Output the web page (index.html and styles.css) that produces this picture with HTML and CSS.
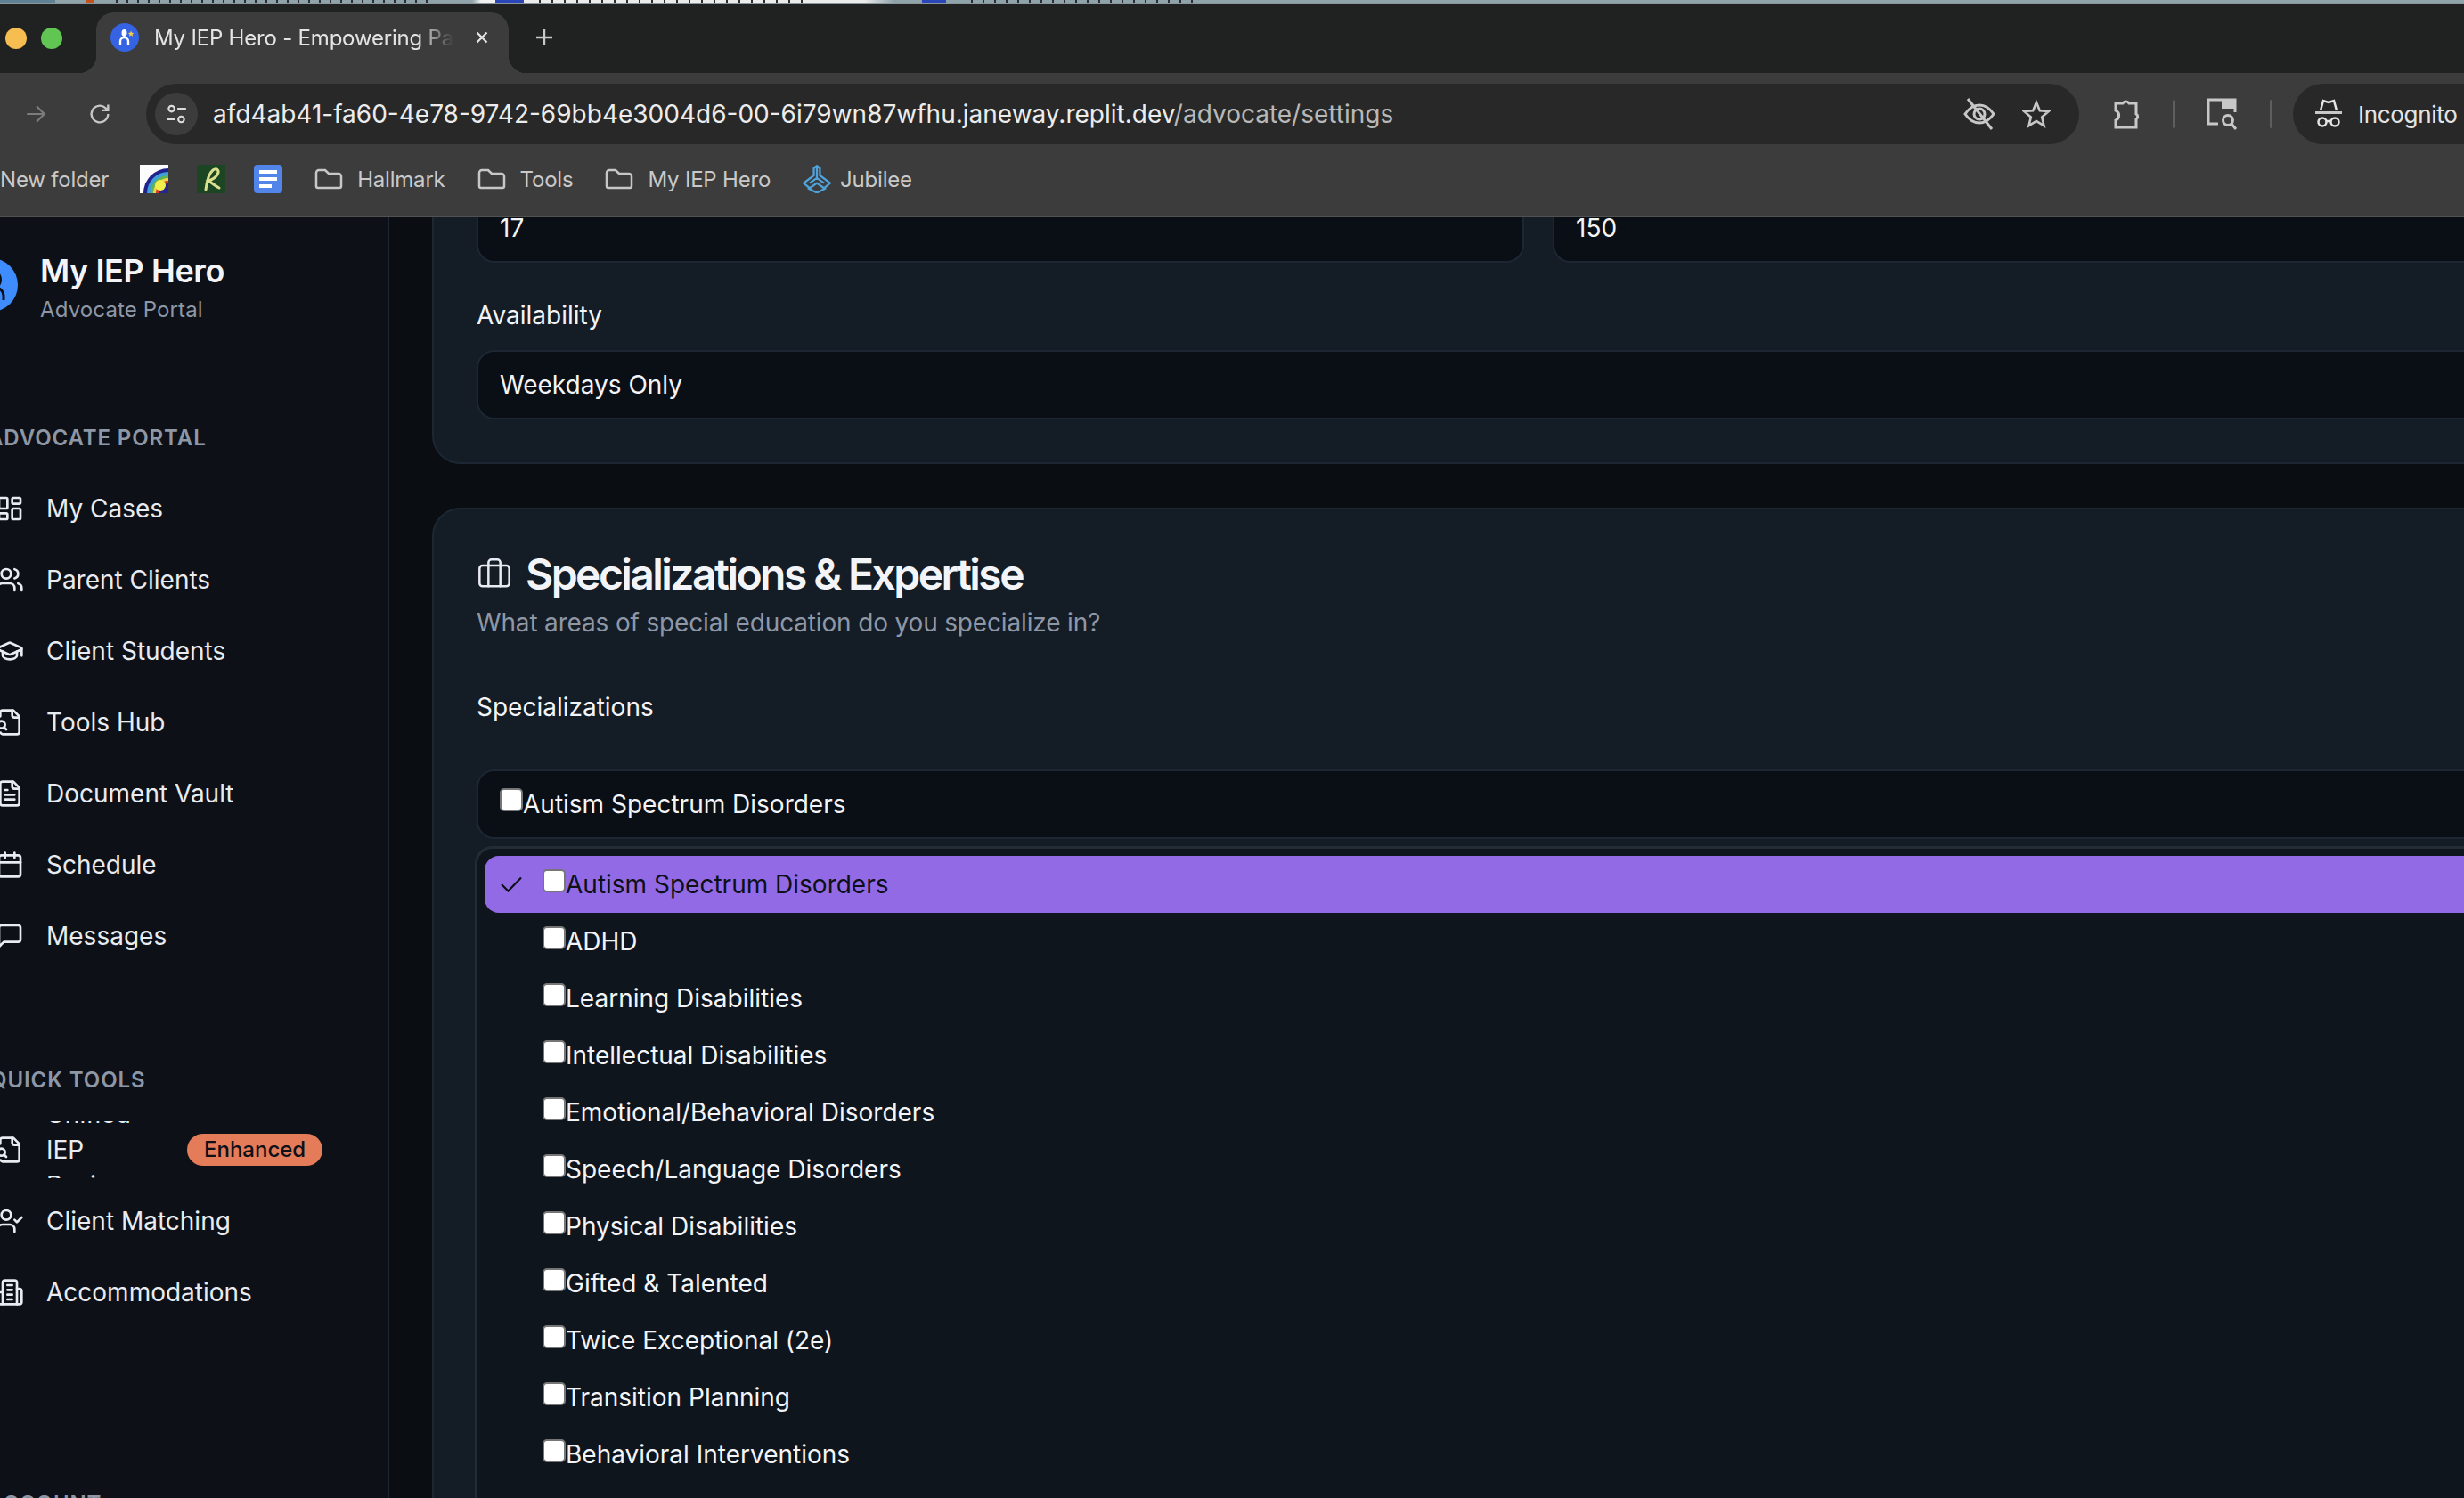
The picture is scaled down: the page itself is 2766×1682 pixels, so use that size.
FILE: index.html
```html
<!DOCTYPE html>
<html lang="en">
  <head>
    <meta charset="UTF-8" />
    <meta name="viewport" content="width=device-width, initial-scale=1.0" />
    <title>My IEP Hero - Advocate Settings</title>
    <link rel="stylesheet" href="styles.css">
  </head>
  <body>
    <div class="top-strip"></div>

    <header class="browser">
      <div class="tabstrip">
        <span class="light light-yellow"></span>
        <span class="light light-green"></span>
        <div class="tab">
          <svg class="favicon" viewBox="0 0 32 32">
            <circle cx="16" cy="16" r="16" fill="#3563e3" />
            <ellipse cx="15.5" cy="11" rx="3" ry="4" fill="#fff" />
            <path d="M11 24v-3.5a4.5 4.5 0 0 1 9 0V24" fill="none" stroke="#fff" stroke-width="2.4" />
            <path d="M23 8.5l1 2.2 2.3.2-1.8 1.5.6 2.3-2.1-1.3-2 1.3.6-2.3-1.8-1.5 2.3-.2z" fill="#f6cf45" />
          </svg>
          <span class="tab-title">My IEP Hero - Empowering Parents</span>
          <svg class="tab-close" viewBox="0 0 16 16"><path d="M2.5 2.5l11 11M13.5 2.5l-11 11" /></svg>
        </div>
        <svg class="new-tab" viewBox="0 0 20 20"><path d="M10 1v18M1 10h18" /></svg>
      </div>

      <div class="toolbar">
        <svg class="tool-icon tool-forward" viewBox="0 0 24 24"><path d="M3 12h18M13 4l8 8-8 8" /></svg>
        <svg class="tool-icon tool-reload" viewBox="0 0 24 24"><path d="M20 12a8 8 0 1 1-2.6-5.9L20 8.5M20 3v5.5h-5.5" /></svg>
        <div class="omnibox">
          <span class="site-btn">
            <svg viewBox="0 0 24 24"><circle cx="7" cy="6.5" r="3" /><path d="M13 6.5h9M2 17.5h9" /><circle cx="17" cy="17.5" r="3" /></svg>
          </span>
          <span class="url">afd4ab41-fa60-4e78-9742-69bb4e3004d6-00-6i79wn87wfhu.janeway.replit.dev<span class="url-path">/advocate/settings</span></span>
          <svg class="omni-icon" viewBox="0 0 36 36"><path d="M2 18c4-6 9-10 16-10s12 4 16 10c-4 6-9 10-16 10S6 24 2 18z" /><circle cx="18" cy="18" r="6" /><path d="M5 1l27 34" /></svg>
          <svg class="omni-icon omni-star" viewBox="0 0 32 32"><path d="M16 3l3.8 9.2 9.9.8-7.5 6.5 2.3 9.7L16 24l-8.5 5.2 2.3-9.7L2.3 13l9.9-.8z" /></svg>
        </div>
        <svg class="tool-icon tool-puzzle" viewBox="0 0 32 36"><path d="M4 6h8a4 4 0 0 1 7 0h8v12a3.5 3.5 0 0 1 0 6v9H4v-8a6 6 0 0 0 0-11z" /></svg>
        <span class="tool-sep"></span>
        <svg class="tool-icon tool-media" viewBox="0 0 36 38">
          <path d="M14 30H3V3h30v14" />
          <path class="fill" d="M18 2h16v11H18z" />
          <circle cx="25" cy="26" r="5.5" /><path d="M29 30l5 6" />
        </svg>
        <span class="tool-sep"></span>
        <div class="incognito">
          <svg viewBox="0 0 30 36">
            <path class="fill" d="M0 15h30v3H0z" />
            <path d="M6 14l3-11 6 2 6-2 3 11" />
            <circle cx="8" cy="27" r="4.5" /><circle cx="22" cy="27" r="4.5" /><path d="M12 26h6" />
          </svg>
          <span>Incognito</span>
        </div>
      </div>

      <nav class="bookmarks">
        <span class="mark mark-first">New folder</span>
        <svg class="fav" viewBox="0 0 32 32">
          <rect width="32" height="32" fill="#fdfdfd" />
          <path d="M32 4A28 28 0 0 0 4 32h28z" fill="#22228c" />
          <path d="M32 8A24 24 0 0 0 8 32h24z" fill="#3f9fd8" />
          <path d="M32 12A20 20 0 0 0 12 32h20z" fill="#62b356" />
          <path d="M32 15A17 17 0 0 0 15 32h17z" fill="#e9d84b" />
          <path d="M32 18A14 14 0 0 0 18 32h14z" fill="#d73a2c" />
          <path d="M32 21A11 11 0 0 0 21 32h11z" fill="#26268c" />
          <circle cx="23" cy="23" r="6" fill="#f2ee4a" />
        </svg>
        <svg class="fav fav-r" viewBox="0 0 32 32">
          <rect width="32" height="32" fill="#1c4523" />
          <path d="M10 28c1-8 3-18 8-22 4-3 8 0 5 5-2 4-7 6-10 7 3 2 8 6 12 8" fill="none" stroke="#dbe08f" stroke-width="3" stroke-linecap="round" />
        </svg>
        <svg class="fav fav-doc" viewBox="0 0 32 32">
          <rect width="32" height="32" rx="4" fill="#5185ea" />
          <path d="M6 6h20v4H6zM6 14h20v4H6zM6 22h14v4H6z" fill="#fff" />
        </svg>
        <span class="mark"><svg class="folder" viewBox="0 0 32 24"><path d="M2 5a3 3 0 0 1 3-3h7l4 4h11a3 3 0 0 1 3 3v11a2 2 0 0 1-2 2H4a2 2 0 0 1-2-2z" /></svg>Hallmark</span>
        <span class="mark"><svg class="folder" viewBox="0 0 32 24"><path d="M2 5a3 3 0 0 1 3-3h7l4 4h11a3 3 0 0 1 3 3v11a2 2 0 0 1-2 2H4a2 2 0 0 1-2-2z" /></svg>Tools</span>
        <span class="mark"><svg class="folder" viewBox="0 0 32 24"><path d="M2 5a3 3 0 0 1 3-3h7l4 4h11a3 3 0 0 1 3 3v11a2 2 0 0 1-2 2H4a2 2 0 0 1-2-2z" /></svg>My IEP Hero</span>
        <span class="mark"><svg class="jubilee" viewBox="0 0 28 28"><path d="M14 1l-3 2.500v7L1 18l6 5 7-5 7 5 6-5-10-7.500v-7zM14 1v12M14 13l-7 5M14 13l7 5M5 23l9 4.500 9-4.500" /></svg>Jubilee</span>
      </nav>
    </header>

    <div class="app">
      <aside class="sidebar">
        <div class="brand">
          <svg class="brand-logo" viewBox="0 0 60 60">
            <circle cx="30" cy="30" r="30" fill="#3f8cff" />
            <ellipse cx="37" cy="24" rx="5" ry="8" fill="#0d1117" />
            <path d="M26 47v-5a9 9 0 0 1 18 0v5" fill="none" stroke="#0d1117" stroke-width="3" />
          </svg>
          <div class="brand-text">
            <div class="brand-name">My IEP Hero</div>
            <div class="brand-sub">Advocate Portal</div>
          </div>
        </div>

        <div class="nav-label">ADVOCATE PORTAL</div>
        <a class="nav-item"><svg viewBox="0 0 24 24"><rect x="3" y="3" width="7" height="9" rx="1" /><rect x="14" y="3" width="7" height="5" rx="1" /><rect x="14" y="12" width="7" height="9" rx="1" /><rect x="3" y="16" width="7" height="5" rx="1" /></svg><span>My Cases</span></a>
        <a class="nav-item"><svg viewBox="0 0 24 24"><path d="M16 21v-2a4 4 0 0 0-4-4H6a4 4 0 0 0-4 4v2" /><circle cx="9" cy="7" r="4" /><path d="M22 21v-2a4 4 0 0 0-3-3.87M16 3.13a4 4 0 0 1 0 7.75" /></svg><span>Parent Clients</span></a>
        <a class="nav-item"><svg viewBox="0 0 24 24"><path d="M21.4 10.900a1 1 0 0 0 0-1.800L12.800 5.200a2 2 0 0 0-1.700 0L2.600 9.100a1 1 0 0 0 0 1.800l8.500 3.900a2 2 0 0 0 1.700 0z" /><path d="M22 10v6M6 12.500V16a6 3 0 0 0 12 0v-3.500" /></svg><span>Client Students</span></a>
        <a class="nav-item"><svg viewBox="0 0 24 24"><path d="M14 2v4a2 2 0 0 0 2 2h4" /><path d="M4.3 20.700A2 2 0 0 0 6 22h12a2 2 0 0 0 2-2V7l-5-5H6a2 2 0 0 0-2 2v3" /><circle cx="5" cy="14" r="3" /><path d="M9 18l-1.900-1.900" /></svg><span>Tools Hub</span></a>
        <a class="nav-item"><svg viewBox="0 0 24 24"><path d="M15 2H6a2 2 0 0 0-2 2v16a2 2 0 0 0 2 2h12a2 2 0 0 0 2-2V7z" /><path d="M14 2v4a2 2 0 0 0 2 2h4M10 9H8M16 13H8M16 17H8" /></svg><span>Document Vault</span></a>
        <a class="nav-item"><svg viewBox="0 0 24 24"><path d="M8 2v4M16 2v4" /><rect x="3" y="4" width="18" height="18" rx="2" /><path d="M3 10h18" /></svg><span>Schedule</span></a>
        <a class="nav-item"><svg viewBox="0 0 24 24"><path d="M21 15a2 2 0 0 1-2 2H7l-4 4V5a2 2 0 0 1 2-2h14a2 2 0 0 1 2 2z" /></svg><span>Messages</span></a>

        <div class="nav-label nav-label-quick">QUICK TOOLS</div>
        <a class="nav-item nav-item-clip"><svg viewBox="0 0 24 24"><path d="M14 2v4a2 2 0 0 0 2 2h4" /><path d="M4.3 20.700A2 2 0 0 0 6 22h12a2 2 0 0 0 2-2V7l-5-5H6a2 2 0 0 0-2 2v3" /><circle cx="5" cy="14" r="3" /><path d="M9 18l-1.900-1.900" /></svg><span class="nav-wrap">Unified IEP Review</span><span class="badge">Enhanced</span></a>
        <a class="nav-item"><svg viewBox="0 0 24 24"><path d="M16 21v-2a4 4 0 0 0-4-4H6a4 4 0 0 0-4 4v2" /><circle cx="9" cy="7" r="4" /><path d="M16 11l2 2 4-4" /></svg><span>Client Matching</span></a>
        <a class="nav-item"><svg viewBox="0 0 24 24"><path d="M6 22V4a2 2 0 0 1 2-2h8a2 2 0 0 1 2 2v18z" /><path d="M6 12H4a2 2 0 0 0-2 2v6a2 2 0 0 0 2 2h2M18 9h2a2 2 0 0 1 2 2v9a2 2 0 0 1-2 2h-2M10 6h4M10 10h4M10 14h4M10 18h4" /></svg><span>Accommodations</span></a>

        <div class="nav-label nav-label-account">ACCOUNT</div>
      </aside>

      <main class="main">
        <section class="card">
          <div class="field-row">
            <div class="input">17</div>
            <div class="input">150</div>
          </div>
          <label class="field-label">Availability</label>
          <div class="input">Weekdays Only</div>
        </section>

        <section class="card">
          <h2 class="card-title">
            <svg viewBox="0 0 24 24"><path d="M16 20V4a2 2 0 0 0-2-2h-4a2 2 0 0 0-2 2v16" /><rect x="2" y="6" width="20" height="14" rx="2" /></svg>
            Specializations &amp; Expertise
          </h2>
          <p class="card-sub">What areas of special education do you specialize in?</p>
          <label class="field-label field-label-spec">Specializations</label>
          <div class="input input-check"><input type="checkbox" />Autism Spectrum Disorders</div>
          <div class="dropdown">
            <div class="option option-active">
              <svg class="option-check" viewBox="0 0 24 18"><path d="M1 9l7.5 7.500L23 1.500" /></svg>
              <input type="checkbox" />Autism Spectrum Disorders
            </div>
            <div class="option"><input type="checkbox" />ADHD</div>
            <div class="option"><input type="checkbox" />Learning Disabilities</div>
            <div class="option"><input type="checkbox" />Intellectual Disabilities</div>
            <div class="option"><input type="checkbox" />Emotional/Behavioral Disorders</div>
            <div class="option"><input type="checkbox" />Speech/Language Disorders</div>
            <div class="option"><input type="checkbox" />Physical Disabilities</div>
            <div class="option"><input type="checkbox" />Gifted &amp; Talented</div>
            <div class="option"><input type="checkbox" />Twice Exceptional (2e)</div>
            <div class="option"><input type="checkbox" />Transition Planning</div>
            <div class="option"><input type="checkbox" />Behavioral Interventions</div>
          </div>
        </section>
      </main>
    </div>
  </body>
</html>
```

FILE: styles.css
```css
html,
body {
  margin: 0;
  overflow: hidden;
  background: #0a0d12;
}

body {
  font-family: Inter, "Liberation Sans", sans-serif;
  width: 2766px;
  height: 1682px;
}

svg {
  display: block;
  flex: none;
}

/* sliver of whatever sat behind the window */
.top-strip {
  height: 4px;
  box-sizing: border-box;
  border-bottom: 1px solid #8b979b;
  background:
    repeating-linear-gradient(90deg, #2b2f33 0 2px, transparent 2px 12px) 130px 0 / 360px 3px no-repeat,
    repeating-linear-gradient(90deg, #2b2f33 0 2px, transparent 2px 14px) 605px 0 / 300px 3px no-repeat,
    repeating-linear-gradient(90deg, #2b2f33 0 2px, transparent 2px 13px) 1090px 0 / 260px 3px no-repeat,
    linear-gradient(90deg, #5f8294 0 62px, #8fa3ab 62px 97px, #c2531d 97px 105px, #8fa3ab 105px 530px, #f0f0f0 540px 556px, #2b46b8 556px 588px, #ececec 588px 970px, #8fa3ab 1004px 1035px, #2b46b8 1035px 1062px, #8fa3ab 1062px);
}

/* browser chrome */
.browser {
  font-family: Inter, sans-serif;
}

.tabstrip {
  height: 78px;
  background: #202222;
  display: flex;
  align-items: flex-end;
}

.light {
  width: 24px;
  height: 24px;
  border-radius: 50%;
  margin-bottom: 27px;
}

.light-yellow {
  background: #f6be50;
  margin-left: 6px;
}

.light-green {
  background: #61c554;
  margin-left: 16px;
}

.tab {
  width: 463px;
  height: 68px;
  margin-left: 38px;
  box-sizing: border-box;
  background: #3c3c3c;
  border-radius: 20px 20px 0 0;
  display: flex;
  align-items: center;
  padding: 0 22px 12px 16px;
  position: relative;
}

.tab::before,
.tab::after {
  content: "";
  position: absolute;
  bottom: 0;
  width: 20px;
  height: 20px;
}

.tab::before {
  left: -20px;
  background: radial-gradient(circle at 0 0, #202222 20px, #3c3c3c 20.5px);
}

.tab::after {
  right: -20px;
  background: radial-gradient(circle at 100% 0, #202222 20px, #3c3c3c 20.5px);
}

.favicon {
  width: 32px;
  height: 32px;
}

.tab-title {
  flex: 1;
  margin-left: 17px;
  color: #e4e4e4;
  font-size: 24px;
  letter-spacing: -0.2px;
  white-space: nowrap;
  overflow: hidden;
  -webkit-mask-image: linear-gradient(to right, #000 88%, transparent 100%);
  mask-image: linear-gradient(to right, #000 88%, transparent 100%);
}

.tab-close {
  width: 16px;
  height: 16px;
  margin-left: 24px;
  fill: none;
  stroke: #e4e4e4;
  stroke-width: 2.2;
}

.new-tab {
  width: 20px;
  height: 20px;
  margin: 0 0 30px 30px;
  fill: none;
  stroke: #c8c8c8;
  stroke-width: 2.4;
}

.toolbar {
  height: 92px;
  background: #3c3c3c;
  display: flex;
  align-items: center;
}

.tool-icon {
  fill: none;
  stroke: #c7c7c7;
  stroke-width: 2;
}

.tool-icon .fill,
.incognito .fill {
  fill: #c7c7c7;
  stroke: none;
}

.tool-forward {
  width: 26px;
  height: 26px;
  margin-left: 27px;
  stroke: #7c7c7c;
}

.tool-reload {
  width: 28px;
  height: 28px;
  margin-left: 45px;
}

.omnibox {
  width: 2170px;
  height: 68px;
  flex: none;
  margin-left: 38px;
  box-sizing: border-box;
  background: #282828;
  border-radius: 34px;
  display: flex;
  align-items: center;
  padding-left: 10px;
}

.site-btn {
  width: 48px;
  height: 48px;
  border-radius: 50%;
  background: #3c3c3c;
  display: flex;
  align-items: center;
  justify-content: center;
}

.site-btn svg {
  width: 26px;
  height: 26px;
  fill: none;
  stroke: #dcdcdc;
  stroke-width: 2;
}

.url {
  flex: 1;
  margin-left: 17px;
  color: #ececec;
  font-size: 28px;
  white-space: nowrap;
}

.url-path {
  color: #b8b8b8;
}

.omni-icon {
  width: 36px;
  height: 36px;
  fill: none;
  stroke: #c7c7c7;
  stroke-width: 3;
}

.omni-star {
  width: 32px;
  height: 32px;
  margin: 0 32px 0 30px;
  stroke-width: 2.6;
}

.tool-puzzle {
  width: 32px;
  height: 36px;
  margin-left: 37px;
  stroke-width: 3;
}

.tool-sep {
  width: 3px;
  height: 32px;
  flex: none;
  background: #5e5e5e;
  border-radius: 2px;
  margin-left: 36px;
}

.tool-media {
  width: 36px;
  height: 38px;
  margin-left: 34px;
  stroke-width: 3;
}

.incognito {
  width: 220px;
  height: 68px;
  flex: none;
  margin-left: 23px;
  background: #282828;
  border-radius: 34px 0 0 34px;
  display: flex;
  align-items: center;
  padding-left: 25px;
  color: #e4e4e4;
  font-size: 26px;
  letter-spacing: -0.3px;
}

.incognito svg {
  width: 30px;
  height: 36px;
  margin-right: 18px;
  fill: none;
  stroke: #e4e4e4;
  stroke-width: 2.5;
}

.bookmarks {
  height: 70px;
  box-sizing: border-box;
  background: #3c3c3c;
  border-bottom: 2px solid #515151;
  padding-bottom: 14px;
  display: flex;
  align-items: center;
  color: #c9c9c9;
  font-size: 24px;
  letter-spacing: -0.2px;
}

.mark {
  display: flex;
  align-items: center;
  margin-right: 36px;
}

.mark-first {
  margin-right: 35px;
}

.fav {
  width: 32px;
  height: 32px;
  margin-right: 32px;
}

.fav-doc {
  margin-right: 36px;
}

.folder {
  width: 32px;
  height: 24px;
  margin-right: 16px;
  fill: none;
  stroke: #c7c7c7;
  stroke-width: 2.5;
}

.jubilee {
  width: 32px;
  height: 32px;
  margin-right: 10px;
  fill: none;
  stroke: #4fa3dc;
  stroke-width: 2;
  stroke-linejoin: round;
}

/* app */
.app {
  display: flex;
  height: 1438px;
  overflow: hidden;
}

.sidebar {
  width: 437px;
  flex: none;
  box-sizing: border-box;
  background: #0d1117;
  border-right: 2px solid #1c2533;
  color: #e8ebf0;
  overflow: hidden;
  padding-top: 46px;
}

.brand {
  display: flex;
  align-items: center;
  margin-left: -40px;
  height: 60px;
}

.brand-logo {
  width: 60px;
  height: 60px;
  margin-right: 25px;
}

.brand-text {
  padding-top: 8px;
}

.brand-name {
  font-size: 36px;
  line-height: 44px;
  font-weight: 600;
  letter-spacing: -0.4px;
  color: #f3f4f8;
}

.brand-sub {
  margin-top: 4px;
  font-size: 24px;
  line-height: 36px;
  color: #8e97a6;
  letter-spacing: 0.13px;
}

.nav-label {
  margin: 126px 0 0 -14px;
  height: 63px;
  line-height: 32px;
  font-size: 24px;
  font-weight: 600;
  color: #8e97a6;
  letter-spacing: 0.9px;
  white-space: nowrap;
}

.nav-label-quick {
  margin-top: 114px;
  margin-left: -11px;
  height: 62px;
}

.nav-label-account {
  margin-top: 190px;
  margin-left: -14px;
}

.nav-item {
  height: 64px;
  margin: 0 0 16px -5px;
  display: flex;
  align-items: center;
  font-size: 28px;
  color: #e8ebf0;
  white-space: nowrap;
}

.nav-item svg {
  width: 32px;
  height: 32px;
  margin-right: 25px;
  fill: none;
  stroke: #e8ebf0;
  stroke-width: 2;
  stroke-linecap: round;
  stroke-linejoin: round;
}

.nav-item-clip {
  overflow: hidden;
}

.nav-wrap {
  width: 100px;
  line-height: 40px;
  white-space: normal;
  flex: none;
}

.badge {
  margin-left: 58px;
  height: 36px;
  padding: 0 19px;
  border-radius: 18px;
  background: #e47b59;
  color: #0d1117;
  font-size: 24px;
  font-weight: 500;
  line-height: 36px;
}

.main {
  flex: none;
  padding: 0 48px;
  margin-top: -77px;
}

.card {
  width: 2484px;
  box-sizing: border-box;
  background: #141c26;
  border: 2px solid #1d2733;
  border-radius: 32px;
  padding: 48px;
  color: #f3f4f8;
  margin-bottom: 49px;
}

.field-row {
  display: flex;
  gap: 32px;
}

.input {
  flex: 1;
  height: 78px;
  box-sizing: border-box;
  background: #0a0e15;
  border: 2px solid #1d2733;
  border-radius: 20px;
  display: flex;
  align-items: center;
  padding: 0 24px;
  font-size: 28px;
  color: #f3f4f8;
}

.field-label {
  display: block;
  font-size: 28px;
  line-height: 40px;
  font-weight: 400;
  margin: 39px 0 19px;
}

.card-title {
  display: flex;
  align-items: center;
  margin: -3px 0 0;
  font-size: 48px;
  line-height: 56px;
  font-weight: 600;
  letter-spacing: -2.55px;
  color: #f3f4f8;
}

.card-title svg {
  width: 40px;
  height: 40px;
  margin-right: 15px;
  fill: none;
  stroke: #e8ebf0;
  stroke-width: 1.5;
  stroke-linecap: round;
  stroke-linejoin: round;
}

.card-sub {
  margin: 6px 0 0;
  font-size: 28px;
  line-height: 40px;
  letter-spacing: -0.16px;
  color: #8e97a6;
}

.field-label-spec {
  margin: 55px 0 50px;
}

input[type="checkbox"] {
  appearance: none;
  width: 26px;
  height: 26px;
  margin: 0;
  flex: none;
  box-sizing: border-box;
  background: #fff;
  border: 2px solid #767676;
  border-radius: 5px;
}

.input-check input[type="checkbox"] {
  margin-top: -10px;
}

.dropdown {
  margin: 8px 0 0 -2px;
  box-sizing: border-box;
  background: #0f151c;
  border: 3px solid #222c37;
  border-radius: 20px;
  padding: 8px 8px 90px;
}

.option {
  height: 64px;
  border-radius: 16px;
  display: flex;
  align-items: center;
  padding-left: 65px;
  font-size: 28px;
  color: #f3f4f8;
  position: relative;
}

.option input[type="checkbox"] {
  margin-top: -8px;
}

.option-active {
  background: #936ae6;
  color: #0d1117;
}

.option-check {
  position: absolute;
  left: 18px;
  top: 23px;
  width: 24px;
  height: 18px;
  fill: none;
  stroke: #0d1117;
  stroke-width: 2.2;
}
```
